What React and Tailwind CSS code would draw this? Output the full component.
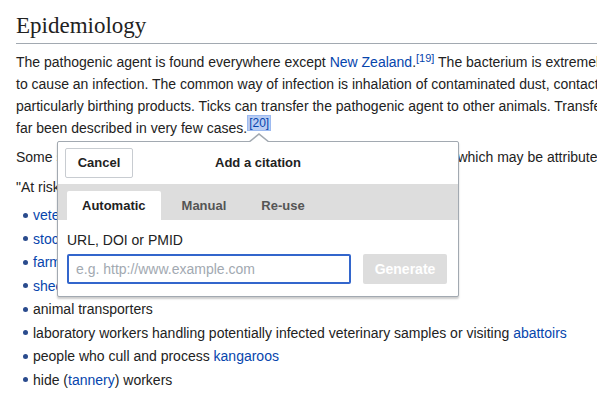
const ITEMS = [
  [{ link: 'veterinary personnel' }],
  [{ link: 'stockyard workers' }],
  [{ link: 'farmers' }],
  [{ link: 'sheep shearers' }],
  ['animal transporters'],
  ['laboratory workers handling potentially infected veterinary samples or visiting ', { link: 'abattoirs' }],
  ['people who cull and process ', { link: 'kangaroos' }],
  ['hide (', { link: 'tannery' }, ') workers'],
]

function Link({ children }) {
  return <a className="text-[#0645ad]">{children}</a>
}

function Popup() {
  return (
    <div className="absolute left-[57px] top-[141px] w-[402px] h-[156px] bg-white border border-[#a2a9b1] rounded-[2px] shadow-[0_2px_2px_rgba(0,0,0,0.2)]">
      {/* pointer */}
      <div className="absolute left-[190px] top-[-9px] w-0 h-0 border-x-[11px] border-x-transparent border-b-[9px] border-b-[#a2a9b1]" />
      <div className="absolute left-[191px] top-[-7px] w-0 h-0 border-x-[10px] border-x-transparent border-b-[8px] border-b-white" />

      <div className="relative h-[42px] flex items-center px-[7px]">
        <button className="w-[68px] h-[30px] border border-[#c8ccd1] rounded-[2px] bg-white text-[13px] font-bold text-[#222]">
          Cancel
        </button>
        <div className="absolute inset-0 flex items-center justify-center text-[13px] font-bold text-[#222] pointer-events-none">
          Add a citation
        </div>
      </div>

      <div className="h-[36px] bg-[#dddddd] flex items-end gap-[7px] pl-[9px]">
        <div className="h-[29px] px-[15px] bg-white rounded-t-[2px] flex items-center text-[13px] font-bold text-[#222]">Automatic</div>
        <div className="h-[29px] px-[14px] flex items-center text-[13px] font-bold text-[#555]">Manual</div>
        <div className="h-[29px] px-[14px] flex items-center text-[13px] font-bold text-[#555]">Re-use</div>
      </div>

      <div className="px-[9px] pt-[11px]">
        <div className="text-[14px] leading-[18px] text-[#222]">URL, DOI or PMID</div>
        <div className="flex gap-[12px] mt-[5px]">
          <div className="w-[284px] h-[30px] border-2 border-[#3366cc] rounded-[2px] flex items-center px-[7px] text-[14px] text-[#a2a9b1]">
            e.g. http://www.example.com
          </div>
          <div className="w-[84px] h-[30px] bg-[#dddddd] rounded-[2px] flex items-center justify-center text-[14px] font-bold text-white">
            Generate
          </div>
        </div>
      </div>
    </div>
  )
}

export default function App() {
  return (
    <div className="relative w-[597px] h-[405px] overflow-hidden bg-white text-[#222] font-['Liberation_Sans',Arial,sans-serif] text-[14px]">
      <div className="pl-4 pt-[11px]">
        <h2 className="font-['Liberation_Serif','DejaVu_Serif',serif] text-[23px] leading-[30px] pb-[2px] border-b border-[#a2a9b1] w-[700px]">
          Epidemiology
        </h2>

        <div className="mt-[7px] leading-[22px] whitespace-nowrap">
          <div>
            The pathogenic agent is found everywhere except <Link>New Zealand</Link>.
            <sup className="text-[11px] text-[#0645ad]">[19]</sup> The bacterium is extremely sturdy and virulent: a single organism is able
          </div>
          <div>to cause an infection. The common way of infection is inhalation of contaminated dust, contact with contaminated milk, meat, or wool, and</div>
          <div>particularly birthing products. Ticks can transfer the pathogenic agent to other animals. Transfer between humans seems extremely rare and has so</div>
          <div>
            far been described in very few cases.
            <sup className="text-[12px] text-[#0645ad] bg-[#b9cdf3] border border-[#9dbaf0] px-[1px]">[20]</sup>
          </div>
        </div>

        <div className="mt-[7px] leading-[22px] whitespace-nowrap">
          Some studies have shown that more men are affected than women,<sup className="text-[11px]">[21]</sup> which may be attributed to different employment rates in typical professions.
        </div>

        <div className="mt-[8px] leading-[22px] whitespace-nowrap">"At risk" groups include:</div>

        <ul className="mt-[6px] leading-[22px] whitespace-nowrap">
          {ITEMS.map((parts, i) => (
            <li key={i} className="flex items-center mb-[1.5px] pl-[7px]">
              <span className="w-[5px] h-[5px] rounded-full bg-[#2a4b8d] mr-[5px]" />
              <span>
                {parts.map((p, j) => (typeof p === 'string' ? <span key={j}>{p}</span> : <Link key={j}>{p.link}</Link>))}
              </span>
            </li>
          ))}
        </ul>
      </div>

      <Popup />
    </div>
  )
}
